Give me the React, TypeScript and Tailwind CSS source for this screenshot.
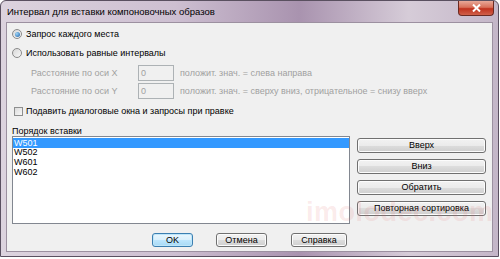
import React from "react";

const font = { fontFamily: '"Liberation Sans", Arial, sans-serif' };

function Radio({ checked }: { checked?: boolean }) {
  return (
    <div className="w-[10px] h-[10px] rounded-full border border-[#8a8a8a] bg-[linear-gradient(135deg,#d8d8d8,#f8f8f8)] flex items-center justify-center shrink-0">
      {checked && (
        <div className="w-[5px] h-[5px] rounded-full bg-[radial-gradient(circle_at_35%_35%,#9fd6f7,#1a5fa8)]" />
      )}
    </div>
  );
}

function Btn({
  children,
  className = "",
  def,
}: {
  children: React.ReactNode;
  className?: string;
  def?: boolean;
}) {
  return (
    <div
      className={
        "flex items-center justify-center rounded-[3px] border text-[9px] leading-none text-black " +
        (def
          ? "border-[#3c7fb1] bg-[linear-gradient(#eaf6fd_0%,#d9f0fc_50%,#bee6fd_50%,#a7d9f5_100%)] shadow-[inset_0_0_0_1px_#bfe6f9] "
          : "border-[#707070] bg-[linear-gradient(#f2f2f2_0%,#ebebeb_50%,#dddddd_50%,#cfcfcf_100%)] shadow-[inset_0_0_0_1px_#fcfcfc] ") +
        className
      }
    >
      {children}
    </div>
  );
}

export default function App() {
  return (
    <div className="w-[500px] h-[259px] bg-white relative overflow-hidden" style={font}>
      <div className="w-[499px] h-[257px] rounded-t-[6px] border border-[#5a5060] bg-[linear-gradient(90deg,#dcd3de_0%,#cdbfd1_35%,#a993af_60%,#d6ccd8_82%,#c4b6c8_100%)] flex flex-col">
        {/* Title bar */}
        <div className="h-[21px] flex items-start shrink-0 relative">
          <div className="pl-[6px] pt-[5px] text-[9.5px] leading-[11px] text-black">
            Интервал для вставки компоновочных образов
          </div>
          <div className="ml-auto mr-[4px] w-[36px] h-[15px] rounded-b-[4px] border border-t-0 border-[#6b2a22] bg-[linear-gradient(#e8a898_0%,#d8705a_45%,#c0321e_55%,#d0604a_100%)] flex items-center justify-center">
            <svg width="9" height="8" viewBox="0 0 9 8">
              <path d="M1 0.5 L8 7.5 M8 0.5 L1 7.5" stroke="#ffffff" strokeWidth="2" />
            </svg>
          </div>
        </div>
        {/* Content */}
        <div className="mx-[5px] h-[230px] bg-[#f0f0f0] border border-[#9c90a0] flex flex-col text-[9px] leading-none text-black pl-[4px]">
          <div className="pt-[5px]" />
          <div className="h-[12px] flex items-center gap-[4px] pl-[1px]">
            <Radio checked />
            <span>Запрос каждого места</span>
          </div>
          <div className="mt-[7px] h-[12px] flex items-center gap-[4px] pl-[1px]">
            <Radio />
            <span>Использовать равные интервалы</span>
          </div>
          <div className="mt-[6px] h-[16px] flex items-center text-[#a0a0a0]">
            <span className="pl-[20px] w-[127px]">Расстояние по оси X</span>
            <div className="w-[36px] h-[16px] border border-[#adb2b5] bg-[#f0f0f0] pl-[2px] flex items-center">0</div>
            <span className="pl-[6px]">положит. знач. = слева направа</span>
          </div>
          <div className="mt-[2px] h-[16px] flex items-center text-[#a0a0a0]">
            <span className="pl-[20px] w-[127px]">Расстояние по оси Y</span>
            <div className="w-[36px] h-[16px] border border-[#adb2b5] bg-[#f0f0f0] pl-[2px] flex items-center">0</div>
            <span className="pl-[6px]">положит. знач. = сверху вниз, отрицательное = снизу вверх</span>
          </div>
          <div className="mt-[6px] h-[12px] flex items-center gap-[3px] pl-[3px]">
            <div className="w-[9px] h-[9px] border border-[#8e8f8f] bg-[linear-gradient(135deg,#dcdcdc,#f8f8f8)] shrink-0" />
            <span>Подавить диалоговые окна и запросы при правке</span>
          </div>
          <div className="mt-[9px] h-[10px] flex items-center pl-[1px]">Порядок вставки</div>
          <div className="flex h-[88px] pl-[1px]">
            <div className="w-[338px] h-[88px] border border-[#828790] bg-white flex flex-col pt-[1px]">
              <div className="h-[10px] bg-[#3399ff] text-white flex items-center pl-[1px]">W501</div>
              <div className="h-[9.7px] flex items-center pl-[1px]">W502</div>
              <div className="h-[9.7px] flex items-center pl-[1px]">W601</div>
              <div className="h-[9.7px] flex items-center pl-[1px]">W602</div>
            </div>
            <div className="ml-[7px] pt-[2px] flex flex-col gap-[6px]">
              <Btn className="w-[129px] h-[15px]">Вверх</Btn>
              <Btn className="w-[129px] h-[15px]">Вниз</Btn>
              <Btn className="w-[129px] h-[15px]">Обратить</Btn>
              <Btn className="w-[129px] h-[15px]">Повторная сортировка</Btn>
            </div>
          </div>
          <div className="mt-[9px] flex pl-[141px]">
            <Btn def className="w-[41px] h-[14px]">OK</Btn>
            <Btn className="ml-[23px] w-[51px] h-[14px]">Отмена</Btn>
            <Btn className="ml-[24px] w-[56px] h-[14px]">Справка</Btn>
          </div>
        </div>
      </div>
      <div className="absolute left-[306px] top-[199px] text-[27px] font-bold leading-none text-[rgba(225,110,110,0.14)] pointer-events-none tracking-[0.5px]">
        imolodec.com
      </div>
    </div>
  );
}
